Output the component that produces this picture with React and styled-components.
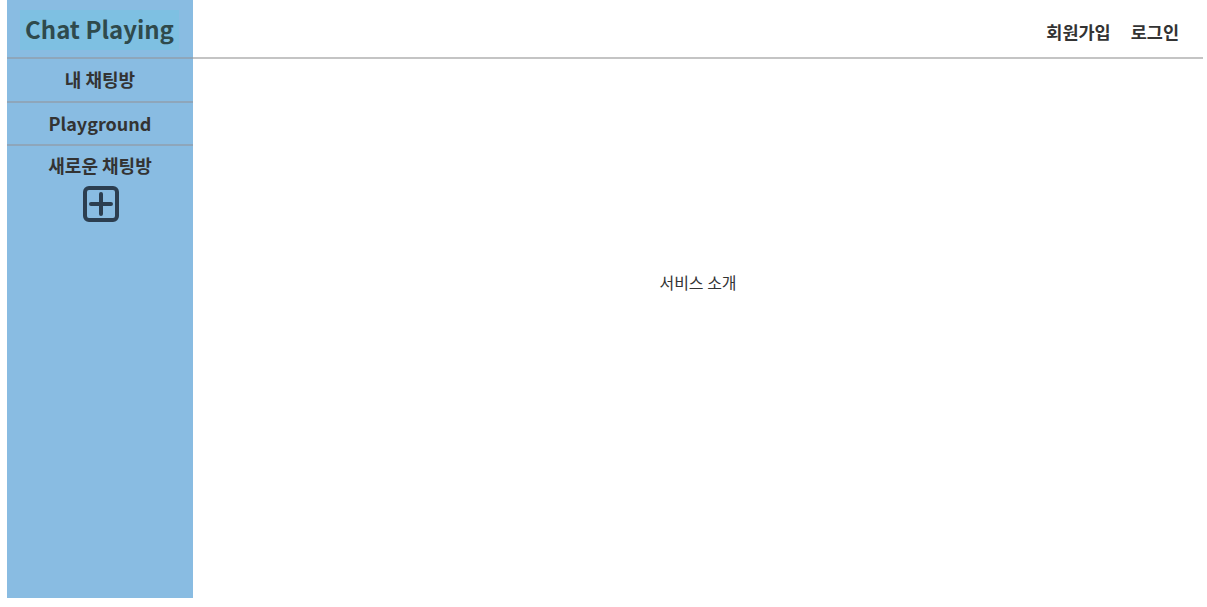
import React from "react";
import styled, { createGlobalStyle } from "styled-components";

const Global = createGlobalStyle`
  html, body { margin: 0; padding: 0; background: #fff; }
  body { font-family: "Noto Sans CJK KR", "Noto Sans", sans-serif; color: #333; }
  * { box-sizing: border-box; }
`;

const Page = styled.div`
  display: flex;
  margin-left: 7px;
  width: 1196px;
  height: 598px;
`;

const Sidebar = styled.aside`
  width: 186px;
  flex: none;
  background: #89bce2;
  display: flex;
  flex-direction: column;
`;

const Brand = styled.div`
  height: 57px;
  display: flex;
  align-items: flex-start;
  justify-content: center;
  padding-top: 10px;
`;

const BrandBox = styled.div`
  width: 159px;
  height: 40px;
  margin-left: -1px;
  background: #7ec0e2;
  color: #2f4a4c;
  font-size: 24px;
  font-weight: 600;
  display: flex;
  align-items: center;
  justify-content: center;
  line-height: 1;
  padding-bottom: 2px;
`;

const NavItem = styled.div`
  border-top: 2px solid #8ea6bb;
  height: ${(p) => p.$h}px;
  display: flex;
  flex-direction: column;
  align-items: center;
  justify-content: ${(p) => (p.$top ? "flex-start" : "center")};
  padding-top: ${(p) => (p.$top ? 9 : 0)}px;
  font-size: 18px;
  font-weight: 700;
  color: #333;
  line-height: 1.2;
`;

const PlusIcon = styled.svg`
  margin-top: 9px;
  margin-left: 2px;
  width: 36px;
  height: 36px;
  display: block;
`;

const Main = styled.main`
  flex: 1;
  display: flex;
  flex-direction: column;
`;

const Header = styled.header`
  height: 59px;
  border-bottom: 2px solid #c4c4c4;
  display: flex;
  justify-content: flex-end;
  align-items: center;
  gap: 20px;
  padding-right: 24px;
  padding-top: 6px;
`;

const HeaderLink = styled.a`
  font-size: 17.5px;
  font-weight: 700;
  color: #333;
  text-decoration: none;
  cursor: pointer;
`;

const Content = styled.section`
  flex: 1;
  display: flex;
  justify-content: center;
  padding-top: 211px;
  font-size: 16px;
  color: #333;
`;

export default function App() {
  return (
    <>
      <Global />
      <Page>
        <Sidebar>
          <Brand>
            <BrandBox>Chat Playing</BrandBox>
          </Brand>
          <NavItem $h={44}>내 채팅방</NavItem>
          <NavItem $h={43}>Playground</NavItem>
          <NavItem $h={100} $top>
            새로운 채팅방
            <PlusIcon viewBox="0 0 36 36">
              <rect x="2" y="2" width="32" height="32" rx="4" fill="none" stroke="#2c3e50" strokeWidth="4" />
              <path d="M18 8v20M8 18h20" stroke="#2c3e50" strokeWidth="4" strokeLinecap="round" />
            </PlusIcon>
          </NavItem>
        </Sidebar>
        <Main>
          <Header>
            <HeaderLink>회원가입</HeaderLink>
            <HeaderLink>로그인</HeaderLink>
          </Header>
          <Content>서비스 소개</Content>
        </Main>
      </Page>
    </>
  );
}
